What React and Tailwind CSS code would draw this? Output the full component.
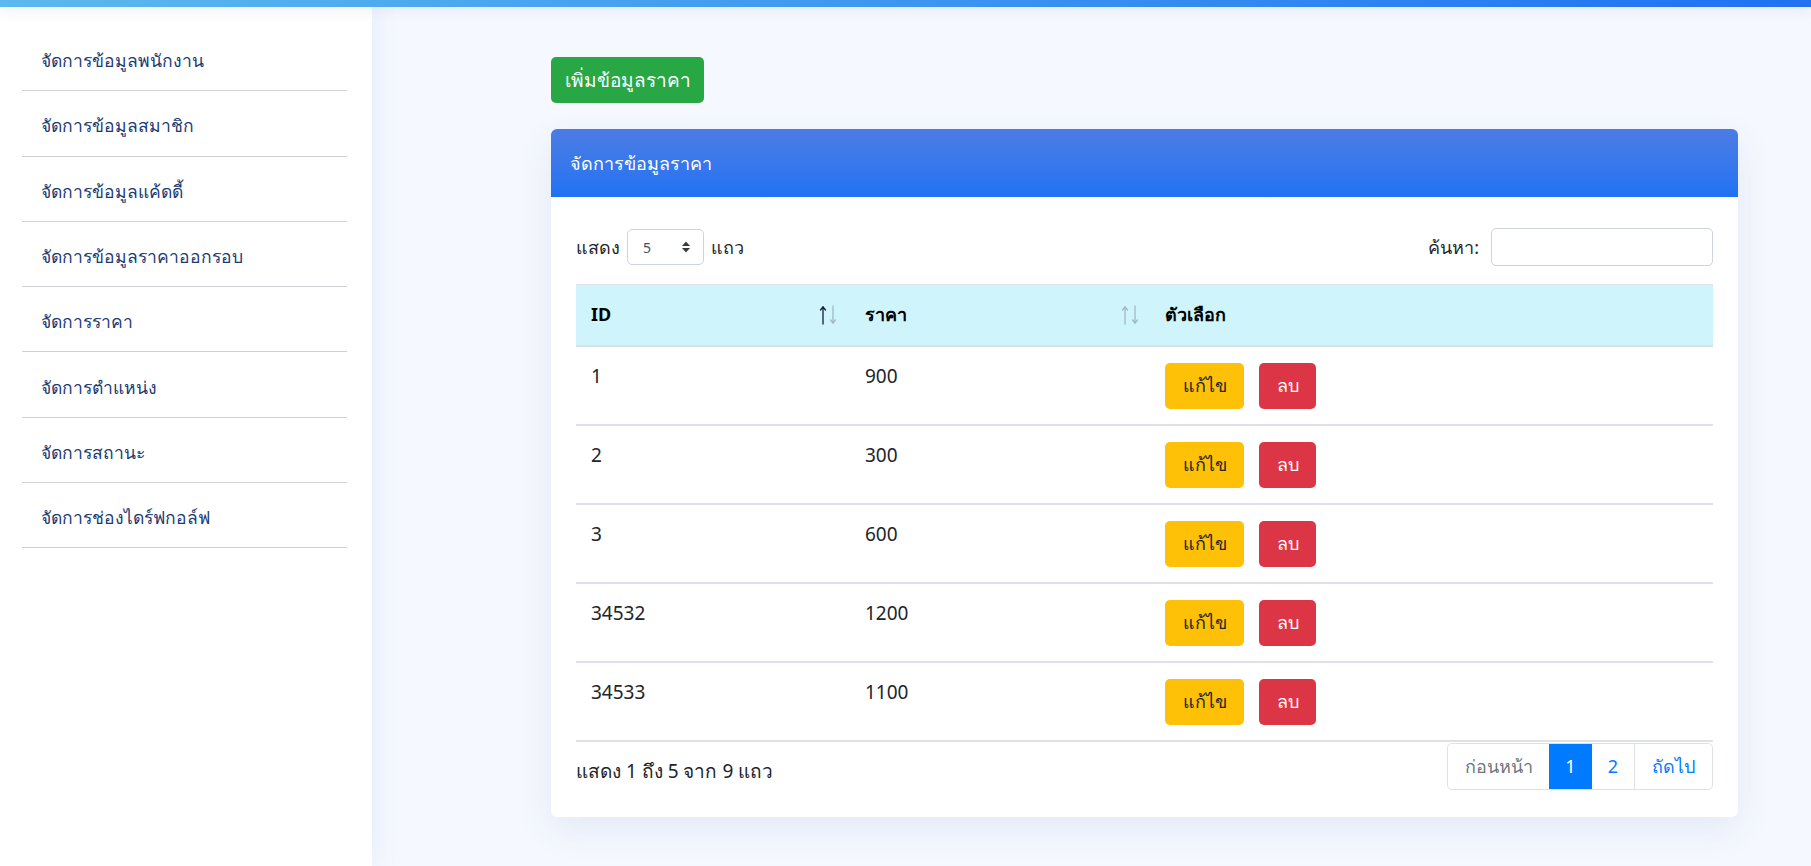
import React from "react";

const menuItems = [
  "จัดการข้อมูลพนักงาน",
  "จัดการข้อมูลสมาชิก",
  "จัดการข้อมูลแค้ดดี้",
  "จัดการข้อมูลราคาออกรอบ",
  "จัดการราคา",
  "จัดการตำแหน่ง",
  "จัดการสถานะ",
  "จัดการช่องไดร์ฟกอล์ฟ",
];

const rows = [
  { id: "1", price: "900" },
  { id: "2", price: "300" },
  { id: "3", price: "600" },
  { id: "34532", price: "1200" },
  { id: "34533", price: "1100" },
];

const SortIcon = ({ active }) => (
  <svg width="20" height="20" viewBox="0 0 20 20" className="shrink-0">
    <g fill="none" strokeWidth="1.3" strokeLinecap="round" strokeLinejoin="round">
      <g stroke={active ? "#1a1a3a" : "#a3b8c0"}>
        <path d="M5 19V2" />
        <path d="M2.5 5L5 2l2.5 3" />
      </g>
      <g stroke="#a3b8c0">
        <path d="M15 1v17" />
        <path d="M12.5 15L15 18l2.5-3" />
      </g>
    </g>
  </svg>
);

const Sidebar = () => (
  <aside className="w-[372px] shrink-0 bg-white pt-[19px] shadow-[4px_0_24px_rgba(60,100,200,0.08)] z-10">
    <ul className="mx-[22px] mr-[25px]">
      {menuItems.map((item) => (
        <li
          key={item}
          className="h-[65.3px] border-b border-[#cfd1d4] flex items-center pl-[19px] pt-[4px] text-[17.5px] text-[#1a3a74]"
        >
          {item}
        </li>
      ))}
    </ul>
  </aside>
);

const App = () => {
  return (
    <div className="min-h-[866px] flex flex-col bg-[#f5f8fe] font-['Noto_Sans',sans-serif] text-[#212529]">
      {/* top bar */}
      <div className="h-[7px] bg-gradient-to-r from-[#5cb9ed] to-[#2171f1] shadow-[0_2px_14px_rgba(30,60,140,0.12)] relative z-20"></div>

      <div className="flex flex-1">
        <Sidebar />

        {/* main */}
        <main className="flex-1 pl-[179px] pr-[73px] pt-[50px] pb-[40px]">
          <button className="h-[46px] w-[153px] rounded-[5px] bg-[#28a745] text-white text-[19px]">
            เพิ่มข้อมูลราคา
          </button>

          <div className="mt-[26px] bg-white rounded-[6px] shadow-[0_12px_36px_rgba(40,80,170,0.09)]">
            <div className="h-[68px] px-[19px] flex items-center rounded-t-[6px] bg-gradient-to-b from-[#4c7ce4] to-[#1e72f3] text-white text-[18px]">
              จัดการข้อมูลราคา
            </div>

            <div className="px-[25px] pt-[31px] pb-[27px]">
              {/* controls */}
              <div className="flex items-center justify-between">
                <div className="flex items-center gap-[7px] text-[18px]">
                  <span>แสดง</span>
                  <div className="w-[77px] h-[36px] border border-[#ced4da] rounded-[5px] flex items-center justify-between pl-[15px] pr-[12px]">
                    <span className="text-[14px] text-[#495057]">5</span>
                    <svg width="10" height="14" viewBox="0 0 10 14">
                      <path d="M1 6L5 1.5 9 6z" fill="#343a40" />
                      <path d="M1 8l4 4.5L9 8z" fill="#343a40" />
                    </svg>
                  </div>
                  <span>แถว</span>
                </div>
                <div className="flex items-center gap-[12px] text-[18px]">
                  <span>ค้นหา:</span>
                  <input className="w-[222px] h-[38px] border border-[#ced4da] rounded-[5px] outline-none px-[10px]" />
                </div>
              </div>

              {/* table */}
              <table className="w-full mt-[18px] border-collapse text-[19px]">
                <thead>
                  <tr className="bg-[#cff4fc] border-t border-[#dee2e6] border-b-2 border-b-[#d7e2e8]">
                    <th className="w-[274px] h-[61px] pl-[15px] pr-[12px] text-left font-bold text-[18px] text-black">
                      <div className="flex items-center justify-between">
                        <span>ID</span>
                        <SortIcon active />
                      </div>
                    </th>
                    <th className="w-[302px] pl-[15px] pr-[12px] text-left font-bold text-[18px] text-black">
                      <div className="flex items-center justify-between">
                        <span>ราคา</span>
                        <SortIcon />
                      </div>
                    </th>
                    <th className="pl-[13px] text-left font-bold text-[18px] text-black">ตัวเลือก</th>
                  </tr>
                </thead>
                <tbody>
                  {rows.map((r) => (
                    <tr key={r.id} className="border-b-2 border-[#dee2e6]">
                      <td className="pl-[15px] pt-[15px] pb-[15px] align-top leading-[28px]">{r.id}</td>
                      <td className="pl-[15px] pt-[15px] pb-[15px] align-top leading-[28px]">{r.price}</td>
                      <td className="pl-[13px] pt-[16px] pb-[15px]">
                        <div className="flex gap-[15px]">
                          <button className="w-[79px] h-[46px] rounded-[5px] bg-[#ffc107] text-[#212529] text-[18px]">
                            แก้ไข
                          </button>
                          <button className="w-[57px] h-[46px] rounded-[5px] bg-[#dc3545] text-white text-[18px]">
                            ลบ
                          </button>
                        </div>
                      </td>
                    </tr>
                  ))}
                </tbody>
              </table>

              {/* footer */}
              <div className="flex items-start justify-between mt-[1px]">
                <div className="mt-[16px] text-[19px] leading-[24px]">แสดง 1 ถึง 5 จาก 9 แถว</div>
                <div className="flex h-[47px] border border-[#dee2e6] rounded-[5px] text-[18px] overflow-hidden">
                  <span className="w-[101px] flex items-center justify-center text-[#6c757d]">ก่อนหน้า</span>
                  <span className="w-[43px] flex items-center justify-center bg-[#007bff] text-white">1</span>
                  <span className="w-[42px] flex items-center justify-center text-[#007bff]">2</span>
                  <span className="w-[78px] flex items-center justify-center text-[#007bff] border-l border-[#dee2e6]">ถัดไป</span>
                </div>
              </div>
            </div>
          </div>
        </main>
      </div>
    </div>
  );
};

export default App;
